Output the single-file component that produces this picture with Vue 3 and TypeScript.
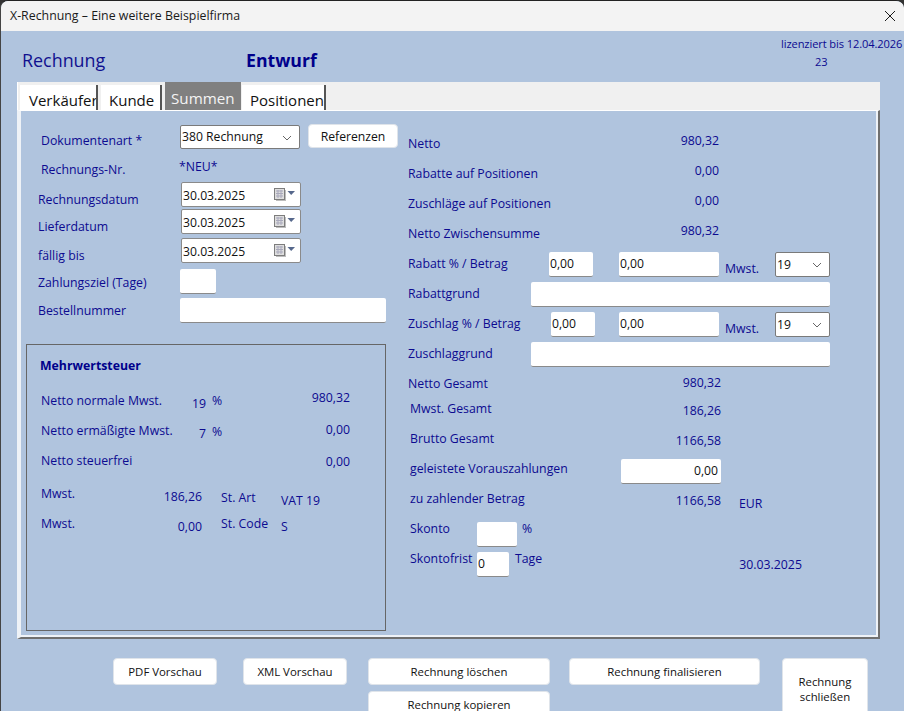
<script setup lang="ts">
const dateFields = ['Rechnungsdatum', 'Lieferdatum', 'fällig bis']
</script>

<template>
  <div class="window">
    <div class="titlebar">
      <span>X-Rechnung – Eine weitere Beispielfirma</span>
      <svg class="close" width="12" height="12" viewBox="0 0 12 12"><path d="M1 1L11 11M11 1L1 11" stroke="#1a1a1a" stroke-width="1" fill="none" /></svg>
    </div>

    <div class="head">
      <div class="doc-title">Rechnung</div>
      <div class="state">Entwurf</div>
      <div class="licence">
        <div>lizenziert bis 12.04.2026</div>
        <div class="licence-no">23</div>
      </div>
    </div>

    <div class="frame">
      <div class="tabs">
        <div class="tab t1">Verkäufer</div>
        <div class="tab t2">Kunde</div>
        <div class="tab active">Summen</div>
        <div class="tab t4">Positionen</div>
      </div>

      <div class="panel">
        <div class="left">
          <div class="fr h28">
            <span class="l1 mt7">Dokumentenart *</span>
            <div class="sel w120">
              <select class="lift"><option>380 Rechnung</option></select>
              <svg class="chev" width="10" height="6" viewBox="0 0 10 6"><path d="M1 1L5 5L9 1" stroke="#666" fill="none" /></svg>
            </div>
            <button class="btn ref">Referenzen</button>
          </div>
          <div class="fr h29">
            <span class="l1 mt8">Rechnungs-Nr.</span>
            <span class="mt5 neu">*NEU*</span>
          </div>
          <div
            v-for="(field, i) in dateFields"
            :key="field"
            class="fr"
            :class="i === 0 ? 'h27' : i === 1 ? 'h29' : 'h31'"
          >
            <span class="l2 ld mt9">{{ field }}</span>
            <div class="date">
              <input value="30.03.2025" />
              <svg class="cal" width="21" height="14" viewBox="0 0 21 14">
                <rect x="2" y="2" width="10" height="11" fill="#bdbdbd" />
                <rect x="0.5" y="0.5" width="10" height="11" fill="#dedede" stroke="#7d7d7d" />
                <path d="M2 3H9M2 5.5H9M2 8H9M4 2V10M7 2V10" stroke="#a9a9bc" fill="none" />
                <path d="M13.5 3H21L17.2 7Z" fill="#56688c" />
              </svg>
            </div>
          </div>
          <div class="fr h29">
            <span class="l2 mt5">Zahlungsziel (Tage)</span>
            <input class="w36" />
          </div>
          <div class="fr h46">
            <span class="l2 mt4">Bestellnummer</span>
            <input class="w206" />
          </div>

          <div class="vat">
            <div class="vat-title">Mehrwertsteuer</div>
            <div class="vr">
              <span class="v1">Netto normale Mwst.</span><span class="v2 d3">19</span><span class="v3">%</span><span class="amt u3">980,32</span>
            </div>
            <div class="vr">
              <span class="v1">Netto ermäßigte Mwst.</span><span class="v2 d3">7</span><span class="v3 d1">%</span><span class="amt u1">0,00</span>
            </div>
            <div class="vr tall">
              <span class="v1">Netto steuerfrei</span><span class="amt d1">0,00</span>
            </div>
            <div class="vr">
              <span class="m1">Mwst.</span><span class="m2 d3">186,26</span><span class="m3 d4">St. Art</span><span class="d7">VAT 19</span>
            </div>
            <div class="vr">
              <span class="m1">Mwst.</span><span class="m2 d3">0,00</span><span class="m3">St. Code</span><span class="d3">S</span>
            </div>
          </div>
        </div>

        <div class="right">
          <div class="rr to719"><span>Netto</span><span class="push u3">980,32</span></div>
          <div class="rr to719"><span>Rabatte auf Positionen</span><span class="push u3">0,00</span></div>
          <div class="rr to719"><span>Zuschläge auf Positionen</span><span class="push u3">0,00</span></div>
          <div class="rr to719"><span>Netto Zwischensumme</span><span class="push u3">980,32</span></div>
          <div class="rr">
            <span class="p141">Rabatt % / Betrag</span>
            <input class="w44 d1" value="0,00" />
            <input class="w100 ml26 d1" value="0,00" />
            <span class="mw d5">Mwst.</span>
            <div class="sel w55 d1">
              <select><option>19</option></select>
              <svg class="chev" width="10" height="6" viewBox="0 0 10 6"><path d="M1 1L5 5L9 1" stroke="#666" fill="none" /></svg>
            </div>
          </div>
          <div class="rr"><span class="p123">Rabattgrund</span><input class="w299 d1" /></div>
          <div class="rr">
            <span class="p143">Zuschlag % / Betrag</span>
            <input class="w44 d1" value="0,00" />
            <input class="w100 ml24 d1" value="0,00" />
            <span class="mw d5">Mwst.</span>
            <div class="sel w55 d1">
              <select><option>19</option></select>
              <svg class="chev" width="10" height="6" viewBox="0 0 10 6"><path d="M1 1L5 5L9 1" stroke="#666" fill="none" /></svg>
            </div>
          </div>
          <div class="rr"><span class="p123">Zuschlaggrund</span><input class="w299 d1" /></div>
          <div class="rr to721"><span>Netto Gesamt</span><span class="push u1">980,32</span></div>
          <div class="rr to721 in2"><span class="u5">Mwst. Gesamt</span><span class="push u3">186,26</span></div>
          <div class="rr to721 in2"><span class="u5">Brutto Gesamt</span><span class="push u3">1166,58</span></div>
          <div class="rr to721 in2"><span class="u5">geleistete Vorauszahlungen</span><input class="w100 push num u2" value="0,00" /></div>
          <div class="rr in2">
            <span class="u5 p311">zu zahlender Betrag</span><span class="u3 w0">1166,58</span><span class="cur">EUR</span>
          </div>
          <div class="rr in2">
            <span class="u5 p67">Skonto</span><input class="w40 d1" /><span class="u5 ml5">%</span>
          </div>
          <div class="rr in2">
            <span class="u5 p67">Skontofrist</span><input class="w32 d1" value="0" /><span class="u5 ml6">Tage</span><span class="fdate d1">30.03.2025</span>
          </div>
        </div>
      </div>
    </div>

    <div class="actions">
      <button class="btn a1">PDF Vorschau</button>
      <button class="btn a2">XML Vorschau</button>
      <div class="stack">
        <button class="btn">Rechnung löschen</button>
        <button class="btn">Rechnung kopieren</button>
      </div>
      <button class="btn a3">Rechnung finalisieren</button>
      <button class="btn a4">Rechnung<br />schließen</button>
    </div>
  </div>
</template>

<style>
html, body { margin: 0; background: #333; }
</style>

<style scoped>
.window {
  width: 904px;
  height: 711px;
  box-sizing: border-box;
  overflow: hidden;
  background: #b0c4de;
  border-top: 1px solid #222;
  border-left: 1px solid #444;
  border-top-left-radius: 8px;
  border-top-right-radius: 8px;
  font-family: "Open Sans", sans-serif;
  font-size: 12.3px;
  line-height: 18px;
  color: #0c0a90;
}
.titlebar {
  height: 30px;
  background: #f3f3f3;
  display: flex;
  align-items: center;
  justify-content: space-between;
  padding: 0 8px 0 9px;
  color: #1a1a1a;
  font-size: 12.35px;
}
.head { height: 51px; display: flex; }
.doc-title { margin: 16px 0 0 21px; font-size: 17.9px; line-height: 26px; width: 224px; color: #10108f; }
.state { margin-top: 16px; font-size: 17.7px; line-height: 26px; font-weight: 700; color: #00008b; }
.licence { margin-left: auto; padding: 4px 1px 0 0; width: 122px; font-size: 11.1px; letter-spacing: -0.1px; }
.licence-no { padding-left: 34px; }

.frame { margin-left: 16px; width: 863px; height: 557px; }
.tabs { height: 28px; background: #f0f0f0; display: flex; align-items: flex-end; border-left: 1px solid #fff; box-sizing: border-box; padding-left: 2px; }
.tab {
  height: 25px;
  box-sizing: border-box;
  background: #fff;
  border-right: 2px solid #555;
  color: #111;
  font-size: 15px;
  line-height: 31px;
  overflow: hidden;
  white-space: nowrap;
}
.t1 { width: 78px; padding-left: 9px; }
.t2 { width: 61px; margin-left: 3px; padding-left: 8px; }
.active { width: 76px; height: 28px; margin-left: 3px; padding-left: 6px; background: #808080; color: #f4f4f4; border-right: 0; line-height: 33px; font-size: 15.2px; }
.t4 { width: 84px; margin-left: 1px; padding-left: 8px; }

.panel {
  height: 529px;
  box-sizing: border-box;
  background: #b0c4de;
  border-style: solid;
  border-color: #fff #6f6f6f #6f6f6f #eef2f7;
  border-width: 1px 2px 2px 4px;
  box-shadow: inset -2px -2px 0 #eef2f7;
  display: flex;
  padding-top: 14px;
}
.left { width: 372px; margin-left: 5px; }
.right { margin-left: 10px; padding-top: 3px; }

.fr { display: flex; align-items: flex-start; }
.h27 { height: 27px; }
.h28 { height: 28px; }
.h29 { height: 29px; }
.h31 { height: 31px; }
.h46 { height: 46px; }
.mt4 { margin-top: 4px; }
.mt5 { margin-top: 5px; }
.mt7 { margin-top: 7px; }
.mt8 { margin-top: 8px; }
.mt9 { margin-top: 9px; }
.l1 { width: 139px; margin-left: 15px; }
.l2 { width: 142px; margin-left: 12px; }
.ld { width: 143px; }
.neu { margin-left: -1px; }

input, select {
  font-family: inherit;
  font-size: 12.2px;
  color: #111;
  background: #fff;
  box-sizing: border-box;
  height: 25px;
  padding: 0 1px;
  margin: 0;
  border: 0;
  border-bottom: 1px solid #8a8a8a;
  border-radius: 2px;
  outline: 0;
  flex: none;
}
select {
  appearance: none;
  width: 100%;
  height: 100%;
  padding: 0 1px;
  border: 1px solid #7a7a7a;
  display: block;
}
.lift { padding-bottom: 2px; }
.sel { position: relative; height: 25px; flex: none; }
.chev { position: absolute; right: 8px; top: 10px; pointer-events: none; }
.date { position: relative; width: 120px; height: 25px; }
.date input { width: 100%; border: 1px solid #8a8a8a; padding-top: 2px; }
.cal { position: absolute; right: 6px; top: 6px; }

.w120 { width: 120px; height: 24px; }
.w55 { width: 55px; }
.w36 { width: 36px; }
.w206 { width: 206px; }
.w44 { width: 44px; }
.w100 { width: 100px; }
.w299 { width: 299px; }
.w40 { width: 40px; }
.w32 { width: 32px; }
.ml26 { margin-left: 26px; }
.ml24 { margin-left: 24px; }
.ml5 { margin-left: 5px; }
.ml6 { margin-left: 6px; }
.num { text-align: right; padding-right: 3px; }

.btn {
  font-family: inherit;
  font-size: 11.4px;
  line-height: 15px;
  color: #111;
  background: #fff;
  border: 1px solid #dfe4ea;
  border-radius: 4px;
  padding: 0;
  box-sizing: border-box;
  flex: none;
}
.ref { width: 90px; height: 24px; margin-left: 8px; margin-top: -1px; font-size: 12.2px; }

.vat { width: 360px; height: 287px; box-sizing: border-box; border: 1px solid #666; padding-left: 13px; }
.vat-title { margin-top: 12px; height: 28px; font-weight: 700; color: #00008b; }
.vr { height: 30px; display: flex; align-items: center; padding-right: 35px; padding-left: 1px; }
.tall { height: 33px; padding-bottom: 3px; box-sizing: border-box; }
.v1 { width: 128px; white-space: nowrap; }
.v2 { width: 37px; text-align: right; }
.v3 { margin-left: 6px; }
.amt, .push { margin-left: auto; }
.m1 { width: 60px; }
.m2 { width: 101px; text-align: right; }
.m3 { width: 60px; margin-left: 19px; white-space: nowrap; }

.rr { height: 30px; display: flex; align-items: center; white-space: nowrap; }
.rr > span, .vr > span { padding-top: 2px; }
.to719 { width: 311px; }
.to721 { width: 313px; }
.in2 { padding-left: 2px; box-sizing: border-box; }
.p141 { width: 141px; }
.p143 { width: 143px; }
.p123 { width: 123px; }
.p311 { width: 311px; flex: none; }
.p67 { width: 67px; }
.w0 { margin-left: -50px; width: 50px; text-align: right; }
.mw { margin-left: 6px; width: 50px; }
.cur { margin-left: 18px; }
.fdate { margin-left: 197px; }

.u1 { margin-bottom: 2px; }
.u2 { margin-bottom: 4px; }
.u3 { margin-bottom: 6px; }
.u5 { margin-bottom: 10px; }
.d1 { margin-top: 2px; }
.d3 { margin-top: 6px; }
.d4 { margin-top: 8px; }
.d5 { margin-top: 10px; }
.d7 { margin-top: 14px; }

.actions { display: flex; align-items: flex-start; padding: 19px 0 0 112px; }
.a1, .a2 { width: 104px; height: 27px; }
.a2 { margin-left: 26px; }
.stack { width: 182px; margin-left: 21px; display: flex; flex-direction: column; gap: 6px; }
.stack .btn { height: 27px; }
.a3 { width: 191px; height: 27px; margin-left: 19px; }
.a4 { width: 86px; height: 61px; margin-left: 22px; }
</style>
